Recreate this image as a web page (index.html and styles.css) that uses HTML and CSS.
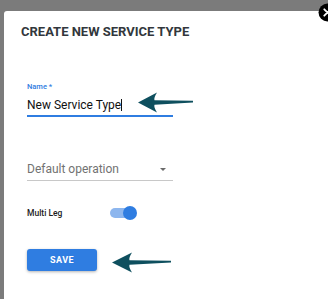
FILE: index.html
```html
<!DOCTYPE html>
<html>
<head>
<meta charset="utf-8">
<link rel="stylesheet" href="styles.css">
</head>
<body>
<div class="dialog">
  <h1 class="title">CREATE NEW SERVICE TYPE</h1>
  <div class="field name-field">
    <label class="label">Name<span class="req"> *</span></label>
    <div class="input">New Service Type<span class="caret"></span></div>
  </div>
  <div class="field select-field">
    <div class="select">Default operation<span class="tri"></span></div>
  </div>
  <div class="toggle-row">
    <span class="toggle-label">Multi Leg</span>
    <span class="switch"><span class="track"></span><span class="thumb"></span></span>
  </div>
  <button class="save">SAVE</button>
</div>
<div class="close">
  <svg width="19" height="19" viewBox="0 0 19 19"><circle cx="9.5" cy="9.5" r="9" fill="#000"/><path d="M6.3 6.3 L12.7 12.7 M12.7 6.3 L6.3 12.7" stroke="#fff" stroke-width="1.8" stroke-linecap="round"/></svg>
</div>
<svg class="arrow arrow-name" width="56" height="22" viewBox="0 0 56 22"><path d="M0 10.5 L19 0.5 Q15.5 6 16.5 8.3 L55 8.8 L55 10.6 L16.5 12.8 Q15.5 15 19 20.5 Z" fill="#0e4f5e"/></svg>
<svg class="arrow arrow-save" width="60" height="22" viewBox="0 0 60 22"><path d="M0 10.5 L20 0.5 Q16.5 6 17.5 8.3 L59 8.8 L59 10.6 L17.5 12.8 Q16.5 15 20 20.5 Z" fill="#0e4f5e"/></svg>
</body>
</html>
```
FILE: styles.css
```css
html, body {
  margin: 0;
  padding: 0;
}
body {
  width: 328px;
  height: 299px;
  overflow: hidden;
  background: #7b7b7b;
  position: relative;
  font-family: Roboto, "Liberation Sans", Arial, sans-serif;
}
.dialog {
  margin: 11px 0 0 4px;
  width: 340px;
  height: 290px;
  background: #fff;
  border-radius: 3px 0 0 0;
  box-sizing: border-box;
  padding: 13px 0 0 17px;
}
.title {
  margin: 0;
  font-size: 13px;
  font-weight: bold;
  color: #32373c;
  line-height: 16px;
}
.field {
  margin-left: 6px;
  width: 146px;
}
.name-field {
  margin-top: 42px;
}
.label {
  display: block;
  font-size: 7.5px;
  font-weight: 500;
  color: #2f7de1;
  line-height: 9px;
}
.input {
  font-size: 12px;
  color: #111;
  line-height: 14px;
  padding: 6.5px 0 3.5px;
  border-bottom: 2px solid #2f7de1;
}
.caret {
  display: inline-block;
  width: 1px;
  height: 12px;
  background: #111;
  vertical-align: -2px;
}
.select-field {
  margin-top: 45px;
}
.select {
  position: relative;
  font-size: 12px;
  color: #727272;
  line-height: 14px;
  padding: 0 0 4px;
  border-bottom: 1px solid #c8c8c8;
}
.tri {
  position: absolute;
  right: 7px;
  top: 6px;
  width: 0;
  height: 0;
  border-left: 3px solid transparent;
  border-right: 3px solid transparent;
  border-top: 3px solid #6a6a6a;
}
.toggle-row {
  margin: 24px 0 0 6px;
  display: flex;
  align-items: center;
  height: 16px;
}
.toggle-label {
  font-size: 8.5px;
  font-weight: 500;
  line-height: 10px;
  color: #1c1c1c;
  width: 83px;
}
.switch {
  position: relative;
  width: 27px;
  height: 14px;
  display: inline-block;
}
.track {
  position: absolute;
  left: 0;
  top: 2px;
  width: 24px;
  height: 10px;
  border-radius: 5px;
  background: #8db6ee;
}
.thumb {
  position: absolute;
  left: 13px;
  top: 0;
  width: 14px;
  height: 14px;
  border-radius: 50%;
  background: #2f7de1;
}
.save {
  display: block;
  margin: 28px 0 0 6px;
  width: 70px;
  height: 22px;
  border: 0;
  border-radius: 3px;
  background: #2f7de1;
  color: #fff;
  font-family: Roboto, "Liberation Sans", Arial, sans-serif;
  font-weight: bold;
  font-size: 9px;
  letter-spacing: 0.5px;
  box-shadow: 0 1px 3px rgba(0,0,0,0.3);
  padding: 0;
}
.close {
  position: absolute;
  left: 318px;
  top: 3px;
  width: 19px;
  height: 19px;
}
.arrow {
  position: absolute;
}
.arrow-name {
  left: 138px;
  top: 92px;
}
.arrow-save {
  left: 112px;
  top: 252px;
}
```
